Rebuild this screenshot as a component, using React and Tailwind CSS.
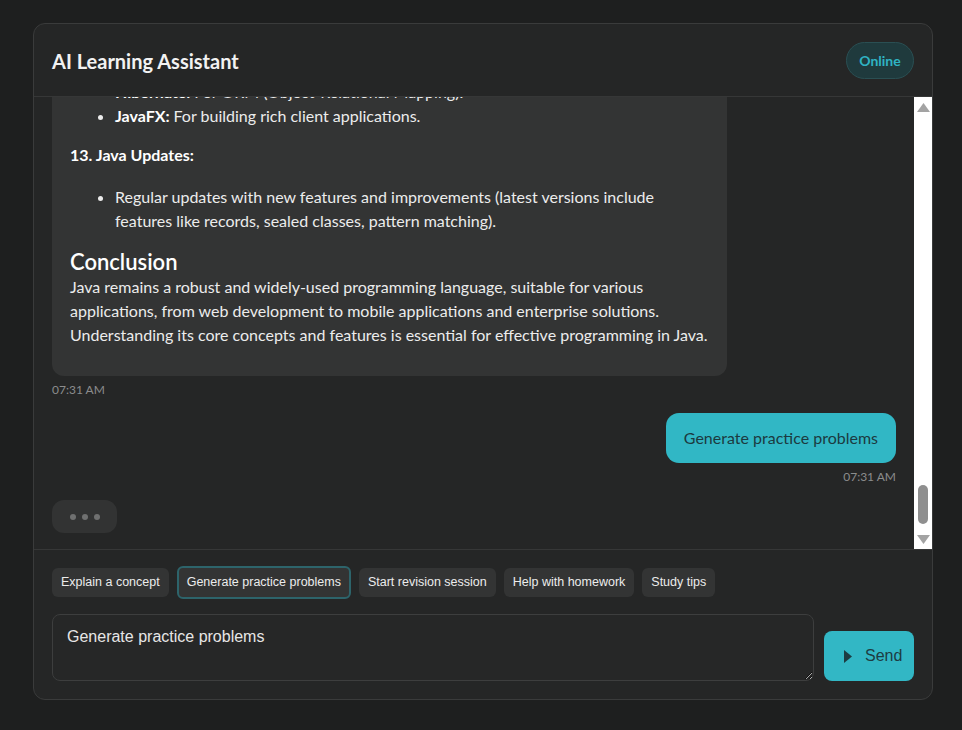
import React, { useLayoutEffect, useRef } from 'react';

const sections = [
  {
    title: '1. Platform Independence:',
    items: [
      ['Write Once, Run Anywhere (WORA):', 'Java code is compiled into bytecode, which runs on any device with a Java Virtual Machine (JVM).'],
    ],
  },
  {
    title: '2. Object-Oriented Programming (OOP):',
    items: [
      ['Classes and Objects:', 'Java is built around classes, which are blueprints for objects.'],
      ['Inheritance:', 'Allows a class to inherit properties and methods from another class.'],
      ['Polymorphism:', 'Methods can perform different tasks based on the object that invokes them.'],
      ['Encapsulation:', 'Bundling of data and methods that operate on the data within one unit.'],
      ['Abstraction:', 'Hiding complex implementation details and showing only essential features.'],
    ],
  },
  {
    title: '3. Syntax and Structure:',
    items: [
      [null, 'Java syntax is similar to C and C++, making it easier for developers familiar with those languages.'],
      [null, 'Every Java application has at least one class and a main method as the entry point.'],
    ],
  },
  {
    title: '4. Data Types:',
    items: [
      ['Primitive Types:', 'int, char, double, boolean, byte, short, long, float.'],
      ['Reference Types:', 'Objects, arrays, and strings.'],
    ],
  },
  {
    title: '5. Control Flow:',
    items: [
      ['Conditional Statements:', 'if, else if, else, switch.'],
      ['Loops:', 'for, while, do-while, and the enhanced for-each loop.'],
    ],
  },
  {
    title: '6. Exception Handling:',
    items: [
      [null, 'Java uses try, catch, finally and throw to handle runtime errors gracefully.'],
      [null, 'Checked exceptions must be declared or handled at compile time.'],
    ],
  },
  {
    title: '7. Collections Framework:',
    items: [
      [null, 'Provides data structures such as List, Set, Map and Queue, along with algorithms to manipulate them.'],
    ],
  },
  {
    title: '8. Multithreading:',
    items: [
      [null, 'Java supports concurrent execution of two or more threads for maximum CPU utilization.'],
      [null, 'The java.util.concurrent package offers executors, locks and thread-safe collections.'],
    ],
  },
  {
    title: '9. Memory Management:',
    items: [
      ['Garbage Collection:', 'Automatic memory management that frees unused objects.'],
      ['Heap and Stack:', 'Objects live on the heap, while method calls and local variables use the stack.'],
    ],
  },
  {
    title: '10. Java Standard Library:',
    items: [
      [null, 'A rich set of APIs for I/O, networking, utilities, database access (JDBC), and more.'],
    ],
  },
  {
    title: '11. Development Tools:',
    items: [
      ['JDK:', 'Java Development Kit, including the compiler (javac) and other tools.'],
      ['IDEs:', 'IntelliJ IDEA, Eclipse, and NetBeans are popular environments.'],
    ],
  },
  {
    title: '12. Frameworks and Libraries:',
    items: [
      ['Spring:', 'For building enterprise applications.'],
      ['Hibernate:', 'For ORM (Object-Relational Mapping).'],
      ['JavaFX:', 'For building rich client applications.'],
    ],
  },
  {
    title: '13. Java Updates:',
    items: [
      [null, 'Regular updates with new features and improvements (latest versions include features like records, sealed classes, pattern matching).'],
    ],
  },
];

const chips = [
  'Explain a concept',
  'Generate practice problems',
  'Start revision session',
  'Help with homework',
  'Study tips',
];

const AiBubble = ({ children, time }) => (
  <div className="flex flex-col items-start">
    <div className="max-w-[80%] rounded-xl bg-[#333434] px-[18px] pt-4 pb-[17px] text-base leading-6 text-[#ececec]">
      {children}
    </div>
    <div className="mt-[6px] text-xs leading-4 text-[#8b8c8c]">{time}</div>
  </div>
);

const UserBubble = ({ children, time }) => (
  <div className="flex flex-col items-end">
    <div className="max-w-[80%] rounded-[13px] bg-[#31b7c5] px-[18px] py-[13px] text-base leading-6 text-[#1c3a40]">
      {children}
    </div>
    <div className="mt-[6px] text-xs leading-4 text-[#8b8c8c]">{time}</div>
  </div>
);

const JavaAnswer = () => (
  <div>
    <h2 className="text-[22px] font-semibold leading-[26px] text-white">Overview of Java</h2>
    <p className="mb-4">
      Java is a high-level, class-based, object-oriented programming language designed to have as few
      implementation dependencies as possible. Here are the key concepts you should know:
    </p>
    {sections.map((s) => (
      <div key={s.title}>
        <p className="mt-[15px] font-bold text-white">{s.title}</p>
        <ul className="mt-[18px] mb-[15px] list-disc pl-[45px]">
          {s.items.map(([label, text], i) => (
            <li key={i}>
              {label && <strong className="font-bold text-white">{label} </strong>}
              {text}
            </li>
          ))}
        </ul>
      </div>
    ))}
    <h2 className="mt-4 text-[22px] font-semibold leading-[26px] text-white">Conclusion</h2>
    <p className="mb-[12px]">
      Java remains a robust and widely-used programming language, suitable for various applications, from web
      development to mobile applications and enterprise solutions. Understanding its core concepts and features
      is essential for effective programming in Java.
    </p>
  </div>
);

// classic light scrollbar drawn beside the message list
const Scrollbar = () => (
  <div className="flex w-[18px] shrink-0 flex-col items-center bg-white">
    <svg width="13" height="9" viewBox="0 0 13 9" className="mt-[6px]" fill="#a3a3a3">
      <polygon points="6.5,0 13,9 0,9" />
    </svg>
    <div className="flex flex-1 flex-col justify-end pb-[11px]">
      <div className="h-[39px] w-[10px] rounded-full bg-[#8f8f8f]" />
    </div>
    <svg width="13" height="9" viewBox="0 0 13 9" className="mb-[5px]" fill="#a3a3a3">
      <polygon points="0,0 13,0 6.5,9" />
    </svg>
  </div>
);

export default function App() {
  const listRef = useRef(null);

  useLayoutEffect(() => {
    const el = listRef.current;
    if (el) el.scrollTop = el.scrollHeight;
  }, []);

  return (
    <div className="min-h-screen bg-[#1e1f1f] pt-[23px] pl-[33px] font-['Lato','Open_Sans',sans-serif]">
      <div className="flex h-[677px] w-[900px] flex-col overflow-hidden rounded-xl border border-[#3a3b3b] bg-[#252626]">
        {/* Header */}
        <div className="flex items-center justify-between border-b border-[#363737] px-[18px] pt-[18px] pb-[17px]">
          <h1 className="text-xl font-bold text-[#f2f2f2]">AI Learning Assistant</h1>
          <span className="flex h-[37px] w-[68px] items-center justify-center rounded-full border border-[#2a4f53] bg-[#1f3a3d] text-sm font-bold text-[#2fb3c3]">
            Online
          </span>
        </div>

        {/* Messages */}
        <div className="flex min-h-0 flex-1">
          <div
            ref={listRef}
            className="flex flex-1 flex-col gap-[15px] overflow-y-auto px-[18px] pt-4 pb-4 [scrollbar-width:none]"
          >
            <AiBubble time="07:29 AM">
              Hello! I'm your AI Learning Assistant. Ask me to explain a concept, generate practice problems, or
              help you plan a revision session.
            </AiBubble>
            <UserBubble time="07:30 AM">Explain a concept</UserBubble>
            <AiBubble time="07:30 AM">Sure! Which concept would you like me to explain?</AiBubble>
            <UserBubble time="07:30 AM">Java</UserBubble>
            <AiBubble time="07:31 AM">
              <JavaAnswer />
            </AiBubble>
            <UserBubble time="07:31 AM">Generate practice problems</UserBubble>
            <div className="flex h-[33px] w-[65px] shrink-0 items-center justify-center gap-[6px] rounded-xl bg-[#323333]">
              <span className="h-[6px] w-[6px] rounded-full bg-[#6f7070]" />
              <span className="h-[6px] w-[6px] rounded-full bg-[#6f7070]" />
              <span className="h-[6px] w-[6px] rounded-full bg-[#6f7070]" />
            </div>
          </div>
          <Scrollbar />
        </div>

        {/* Input area */}
        <div className="border-t border-[#363737] px-[18px] pt-4 pb-[18px]">
          <div className="flex h-[33px] flex-wrap items-center gap-2 font-['Liberation_Sans',Arial,sans-serif]">
            {chips.map((c, i) => (
              <button
                key={c}
                className={`flex items-center rounded-md bg-[#333434] text-[12.5px] text-[#ececec] ${
                  i === 1 ? 'h-[33px] border-2 border-[#2d646b] px-2' : 'h-[29px] px-[9px]'
                }`}
              >
                {c}
              </button>
            ))}
          </div>
          <div className="mt-[15px] flex items-end gap-[10px]">
            <textarea
              defaultValue="Generate practice problems"
              className="h-[67px] flex-1 rounded-lg border border-[#3d3e3e] bg-[#262727] px-[14px] py-[10px] font-['Liberation_Sans',Arial,sans-serif] text-base text-[#e6e6e6] outline-none"
            />
            <button className="flex h-[50px] w-[90px] items-center gap-[13px] rounded-lg bg-[#32b7c5] pl-5 font-['Liberation_Sans',Arial,sans-serif] text-base text-[#1d3c42]">
              <svg width="8" height="13" viewBox="0 0 8 13" fill="currentColor">
                <polygon points="0,0 8,6.5 0,13" />
              </svg>
              Send
            </button>
          </div>
        </div>
      </div>
    </div>
  );
}
